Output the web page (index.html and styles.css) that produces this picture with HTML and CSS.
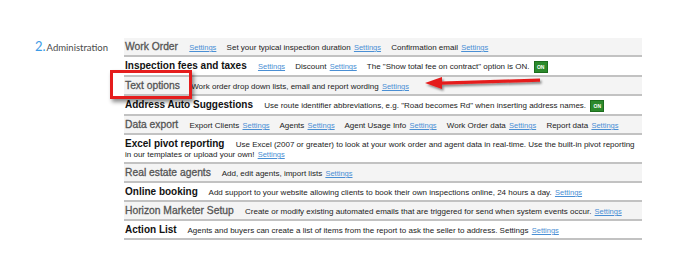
FILE: index.html
```html
<!DOCTYPE html>
<html lang="en">
<head>
    <meta charset="UTF-8">
    <title>Administration settings</title>
    <link rel="stylesheet" href="styles.css">
</head>
<body>
    <div class="page">
        <div class="section-label"><span class="num">2.</span>Administration</div>

        <div class="rows">
            <div class="row alt">
                <span class="title">Work Order</span>
                <a href="#" class="link">Settings</a>
                <span class="item">Set your typical inspection duration <a href="#" class="link">Settings</a></span>
                <span class="item">Confirmation email <a href="#" class="link">Settings</a></span>
            </div>
            <div class="row">
                <span class="title">Inspection fees and taxes</span>
                <a href="#" class="link">Settings</a>
                <span class="item">Discount <a href="#" class="link">Settings</a></span>
                <span class="item">The "Show total fee on contract" option is ON. <span class="on">ON</span></span>
            </div>
            <div class="row alt">
                <span class="title">Text options</span>
                <span class="item">Work order drop down lists, email and report wording <a href="#" class="link">Settings</a></span>
            </div>
            <div class="row">
                <span class="title">Address Auto Suggestions</span>
                <span class="item">Use route identifier abbreviations, e.g. "Road becomes Rd" when inserting address names. <span class="on">ON</span></span>
            </div>
            <div class="row alt">
                <span class="title">Data export</span>
                <span class="item">Export Clients <a href="#" class="link">Settings</a></span>
                <span class="item">Agents <a href="#" class="link">Settings</a></span>
                <span class="item">Agent Usage Info <a href="#" class="link">Settings</a></span>
                <span class="item">Work Order data <a href="#" class="link">Settings</a></span>
                <span class="item">Report data <a href="#" class="link">Settings</a></span>
            </div>
            <div class="row">
                <span class="title">Excel pivot reporting</span>
                <span class="desc">Use Excel (2007 or greater) to look at your work order and agent data in real-time. Use the built-in pivot reporting in our templates or upload your own! <a href="#" class="link">Settings</a></span>
            </div>
            <div class="row alt">
                <span class="title">Real estate agents</span>
                <span class="item">Add, edit agents, import lists <a href="#" class="link">Settings</a></span>
            </div>
            <div class="row">
                <span class="title">Online booking</span>
                <span class="item">Add support to your website allowing clients to book their own inspections online, 24 hours a day. <a href="#" class="link">Settings</a></span>
            </div>
            <div class="row alt">
                <span class="title">Horizon Marketer Setup</span>
                <span class="item">Create or modify existing automated emails that are triggered for send when system events occur. <a href="#" class="link">Settings</a></span>
            </div>
            <div class="row">
                <span class="title">Action List</span>
                <span class="item">Agents and buyers can create a list of items from the report to ask the seller to address. Settings <a href="#" class="link">Settings</a></span>
            </div>
        </div>

        <!-- annotation: red box + arrow over the "Text options" row -->
        <div class="callout-box"></div>
        <svg class="callout-arrow" width="130" height="20" viewBox="0 0 130 20">
            <defs>
                <filter id="sh" x="-10%" y="-50%" width="130%" height="220%">
                    <feDropShadow dx="1.5" dy="2" stdDeviation="1.2" flood-color="#000" flood-opacity="0.45"/>
                </filter>
            </defs>
            <g filter="url(#sh)">
                <polygon points="2,9 19,3 19,15" fill="#e51d1d"/>
                <polygon points="18,7.5 117,4.5 117,7.8 18,10.8" fill="#e51d1d"/>
            </g>
        </svg>
    </div>
</body>
</html>
```

FILE: styles.css
```css
* {
    box-sizing: border-box;
    margin: 0;
    padding: 0;
}

body {
    font-family: 'Liberation Sans', Arial, sans-serif;
    background-color: #fff;
    color: #222;
}

.page {
    position: relative;
    width: 684px;
    height: 264px;
    display: flex;
    padding: 38px 0 0 35px;
}

.section-label {
    width: 89px;
    font-family: Lato, 'Open Sans', sans-serif;
    font-size: 9.5px;
    color: #4a4a4a;
    line-height: 14px;
    padding-top: 1px;
}

.section-label .num {
    color: #3c9be6;
    font-size: 13px;
    margin-right: 1px;
}

.rows {
    width: 518px;
    align-self: flex-start;
}

.row {
    background-color: #fff;
    border-bottom: 2px solid #c2c2c2;
    padding: 4px 0 2px 1px;
    font-size: 8px;
    line-height: 10px;
    color: #222;
}

.row.alt {
    background-color: #f4f4f4;
}

.title {
    font-size: 10px;
    font-weight: bold;
    color: #111;
    margin-right: 9px;
}

.row.alt .title {
    font-size: 10.3px;
    font-weight: normal;
    color: #555;
    -webkit-text-stroke: 0.3px #555;
}

.item {
    margin-right: 8px;
}

.link {
    font-size: 7.5px;
    color: #4a8fd4;
    text-decoration: underline;
    margin-left: 1px;
}

.title + .link {
    margin-left: 0;
    margin-right: 8px;
}

.on {
    display: inline-block;
    width: 14px;
    height: 12px;
    margin-left: 2px;
    background-color: #2c8a2c;
    border: 1px solid #1d6d1d;
    color: #fff;
    font-size: 5px;
    font-weight: bold;
    line-height: 10px;
    text-align: center;
    vertical-align: middle;
}

.callout-box {
    position: absolute;
    left: 110px;
    top: 70px;
    width: 82px;
    height: 29px;
    border: 3px solid #e51d1d;
    box-shadow: 2px 3px 4px rgba(0,0,0,0.45);
}

.callout-arrow {
    position: absolute;
    left: 423px;
    top: 74px;
}
```
